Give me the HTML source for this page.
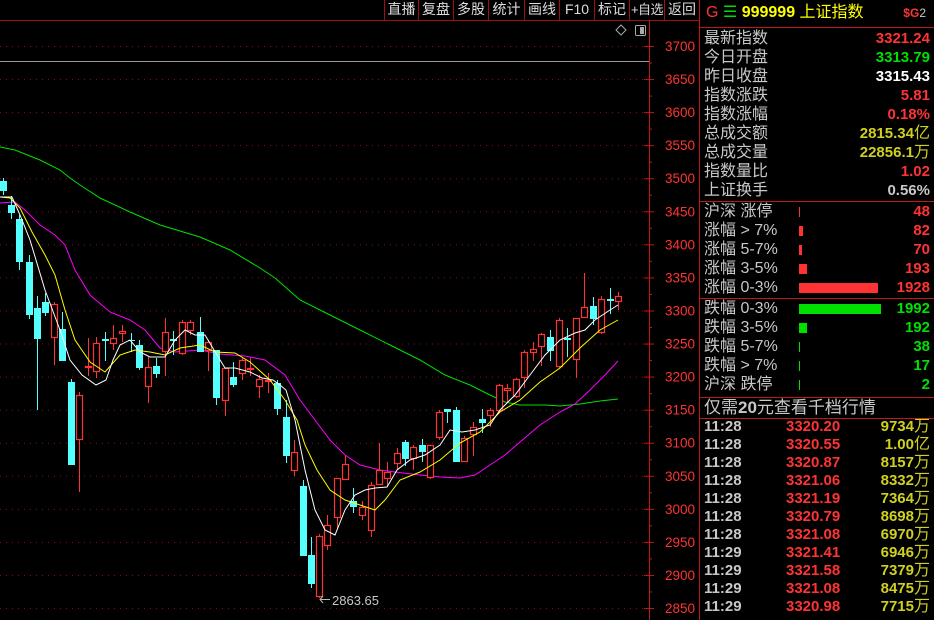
<!DOCTYPE html>
<html><head><meta charset="utf-8"><style>
*{margin:0;padding:0;box-sizing:border-box}
body{width:934px;height:620px;background:#000;overflow:hidden;position:relative;font-family:"Liberation Sans","Noto Sans CJK SC",sans-serif;color:#c8c8c8}
.tb{position:absolute;top:0;height:20px;border-left:1px solid #a01010;font-size:14px;color:#ddd;text-align:center;line-height:19px;white-space:nowrap;overflow:hidden}
#rp{position:absolute;left:699px;top:0;width:235px;height:620px;border-left:1px solid #c01818}
.r{position:absolute;left:4px;right:4px;height:19px;font-size:16px;line-height:19px}
.r .l{position:absolute;left:0;color:#c8c8c8}
.r .v{position:absolute;right:0;font-weight:bold;font-size:15px}
.hl{position:absolute;left:0;right:0;height:1px;background:#c01818}
.bar{position:absolute;left:95px;top:5px;height:10px}
.red{color:#ff3333}.grn{color:#00e000}.wht{color:#fff}.yel{color:#d0d020}.gry{color:#c8c8c8}
.t{position:absolute;left:4px;right:4px;height:18px;font-size:15px;line-height:18px;font-weight:bold}
.t>span{position:absolute}
</style></head><body>
<svg id="ch" width="699" height="620" style="position:absolute;left:0;top:0"></svg>
<div class="tb" style="left:384px;width:34px">直播</div>
<div class="tb" style="left:418px;width:35px">复盘</div>
<div class="tb" style="left:453px;width:35px">多股</div>
<div class="tb" style="left:488px;width:36px">统计</div>
<div class="tb" style="left:524px;width:35px">画线</div>
<div class="tb" style="left:559px;width:35px">F10</div>
<div class="tb" style="left:594px;width:35px">标记</div>
<div class="tb" style="left:629px;width:35px;font-size:13px;letter-spacing:-0.5px">+自选</div>
<div class="tb" style="left:664px;width:35px">返回</div>
<div id="rp">
<div style="position:absolute;left:6px;top:3px;font-size:16px;line-height:20px"><span class="red">G</span> <span class="grn">☰</span> <span style="color:#ffff00;font-weight:bold">999999</span> <span style="color:#ffff00">上证指数</span></div>
<div style="position:absolute;right:8px;top:6px;font-size:12px"><span class="red" style="font-weight:bold">$G</span>2</div>
<div class="hl" style="top:27px"></div>
<div class="r" style="top:29px"><span class="l">最新指数</span><span class="v red">3321.24</span></div>
<div class="r" style="top:48px"><span class="l">今日开盘</span><span class="v grn">3313.79</span></div>
<div class="r" style="top:67px"><span class="l">昨日收盘</span><span class="v wht">3315.43</span></div>
<div class="r" style="top:86px"><span class="l">指数涨跌</span><span class="v red">5.81</span></div>
<div class="r" style="top:105px"><span class="l">指数涨幅</span><span class="v red">0.18%</span></div>
<div class="r" style="top:124px"><span class="l">总成交额</span><span class="v yel">2815.34<span style="font-weight:normal;font-size:16px">亿</span></span></div>
<div class="r" style="top:143px"><span class="l">总成交量</span><span class="v yel">22856.1<span style="font-weight:normal;font-size:16px">万</span></span></div>
<div class="r" style="top:162px"><span class="l">指数量比</span><span class="v red">1.02</span></div>
<div class="r" style="top:181px"><span class="l">上证换手</span><span class="v gry">0.56%</span></div>
<div class="hl" style="top:201px"></div>
<div class="r" style="top:202px"><span class="l">沪深 涨停</span><div class="bar" style="width:1px;background:#ff3333"></div><span class="v red">48</span></div>
<div class="r" style="top:221px"><span class="l">涨幅 &gt; 7%</span><div class="bar" style="width:4px;background:#ff3333"></div><span class="v red">82</span></div>
<div class="r" style="top:240px"><span class="l">涨幅 5-7%</span><div class="bar" style="width:3px;background:#ff3333"></div><span class="v red">70</span></div>
<div class="r" style="top:259px"><span class="l">涨幅 3-5%</span><div class="bar" style="width:8px;background:#ff3333"></div><span class="v red">193</span></div>
<div class="r" style="top:278px"><span class="l">涨幅 0-3%</span><div class="bar" style="width:79px;background:#ff3333"></div><span class="v red">1928</span></div>
<div class="hl" style="top:298px"></div>
<div class="r" style="top:299px"><span class="l">跌幅 0-3%</span><div class="bar" style="width:82px;background:#00e000"></div><span class="v grn">1992</span></div>
<div class="r" style="top:318px"><span class="l">跌幅 3-5%</span><div class="bar" style="width:8px;background:#00e000"></div><span class="v grn">192</span></div>
<div class="r" style="top:337px"><span class="l">跌幅 5-7%</span><div class="bar" style="width:1px;background:#00e000"></div><span class="v grn">38</span></div>
<div class="r" style="top:356px"><span class="l">跌幅 &gt; 7%</span><div class="bar" style="width:1px;background:#00e000"></div><span class="v grn">17</span></div>
<div class="r" style="top:375px"><span class="l">沪深 跌停</span><div class="bar" style="width:1px;background:#00e000"></div><span class="v grn">2</span></div>
<div class="hl" style="top:397px"></div>
<div class="r" style="top:398px;font-size:17px"><span class="l">仅需<b>20</b>元查看千档行情</span></div>
<div class="hl" style="top:418px"></div>
<div id="ticks"></div>
</div>
<script>
var svg=document.getElementById('ch'),h='';
h+='<line x1="0" y1="20.5" x2="699" y2="20.5" stroke="#a01010"/>';
h+='<line x1="649.5" y1="20" x2="649.5" y2="620" stroke="#c01818"/>';
h+='<line x1="0" y1="61.5" x2="649" y2="61.5" stroke="#999"/>';
for(var i=0;i<18;i++){var y=46+i*33.06,p=3700-i*50;
h+='<line x1="0" y1="'+(y+.5)+'" x2="649" y2="'+(y+.5)+'" stroke="#8a1010" stroke-dasharray="1,5"/>';
h+='<line x1="644" y1="'+(y+.5)+'" x2="654" y2="'+(y+.5)+'" stroke="#c01818"/>';
h+='<line x1="649" y1="'+(y+17)+'" x2="652" y2="'+(y+17)+'" stroke="#c01818"/>';
h+='<text x="695" y="'+(y+5)+'" fill="#ff3333" font-size="13.5" text-anchor="end" font-family="Liberation Sans">'+p+'</text>';}
h+='<path d="M621 25 l5 5 l-5 5 l-5 -5z" fill="none" stroke="#aaa"/>';
h+='<rect x="635.5" y="25.5" width="10" height="10" fill="none" stroke="#aaa" rx="1"/><rect x="640" y="27" width="4" height="7" fill="#aaa"/>';
function pl(c,pts){h+='<polyline fill="none" stroke="'+c+'" stroke-width="1" points="'+pts+'"/>';}
pl('#00e000','0,147 15,150 40,160 60,170 70,178 80,185 100,198 130,212 160,225 200,237 230,250 260,268 275,278 300,300 330,315 360,330 390,345 420,360 445,375 470,385 490,395 505,402 520,405 545,405 560,406 580,404 600,401 618,399');
pl('#ff00ff','0,203 15,202 25,210 40,225 55,235 65,245 75,270 90,295 110,312 130,320 145,330 160,348 175,352 200,350 220,354 245,356 265,360 285,375 300,400 315,420 330,440 345,455 360,465 380,470 395,472 420,475 440,477 460,478 475,475 490,465 505,455 520,442 540,425 560,412 575,404 590,390 605,375 618,361');
var cs=[[3,0,181,191,178,195],[11,0,205,213,196,219],[19,0,219,262,215,270],[29,0,262,315,255,319],[37,0,308,339,296,410],[45,0,302,313,293,316],[54,1,304,338,302,365],[62,0,329,361,312,361],[71,0,382,465,379,465],[79,1,395,440,392,492],[88,1,366,368,338,376],[96,1,343,372,337,378],[105,0,339,341,332,361],[113,1,338,344,325,350],[122,1,331,334,325,342],[131,0,340,341,333,352],[139,0,345,368,340,370],[148,1,367,387,357,403],[156,0,366,374,358,378],[165,1,332,352,318,376],[173,0,339,341,331,355],[182,1,322,354,320,355],[190,1,322,331,320,335],[200,0,332,352,317,352],[208,1,342,351,340,371],[216,0,350,398,350,405],[225,1,368,401,368,416],[233,0,377,385,362,387],[242,1,360,374,358,380],[250,1,368,370,358,376],[259,1,379,387,375,398],[268,1,380,382,373,393],[277,0,383,409,380,415],[286,0,417,456,400,463],[294,1,452,471,440,476],[303,0,486,556,480,556],[311,0,555,584,537,588],[319,1,536,597,534,598],[327,1,525,546,515,550],[337,1,478,518,478,530],[345,1,464,480,455,480],[353,0,501,507,488,513],[362,1,507,516,501,520],[371,1,485,531,482,537],[379,1,470,485,443,485],[387,1,472,479,462,487],[397,1,453,464,448,470],[405,0,442,459,440,466],[413,1,447,459,445,470],[422,0,445,452,439,462],[430,1,445,478,445,479],[439,1,412,438,410,440],[447,0,409,412,409,423],[456,0,410,462,407,462],[464,1,438,462,436,462],[473,1,427,435,422,456],[482,0,419,423,409,433],[490,1,410,416,408,427],[499,1,385,411,384,413],[507,1,388,391,384,403],[516,1,379,397,378,398],[524,1,352,378,350,388],[533,1,349,353,342,361],[541,1,334,347,333,366],[550,0,337,351,330,361],[559,1,320,367,318,368],[567,0,338,340,328,357],[576,1,318,360,318,378],[584,1,307,318,273,318],[593,0,306,319,297,325],[601,1,299,333,296,334],[610,0,299,301,288,314],[618,1,296,302,292,310]];
cs.forEach(function(c){var x=c[0],col=c[1]?'#ff3333':'#54ffff';
h+='<line x1="'+(x+.5)+'" y1="'+c[4]+'" x2="'+(x+.5)+'" y2="'+c[5]+'" stroke="'+col+'"/>';
var hh=Math.max(c[3]-c[2],1);
if(c[1])h+='<rect x="'+(x-2.5)+'" y="'+(c[2]+.5)+'" width="6" height="'+(hh-1<1?1:hh-1)+'" fill="#000" stroke="'+col+'" stroke-width="1.2"/>';
else h+='<rect x="'+(x-3)+'" y="'+c[2]+'" width="7" height="'+hh+'" fill="'+col+'"/>';});
pl('#ffff00','0,197 10,198 20,208 32,232 45,255 55,275 65,310 75,340 90,362 105,372 120,355 135,350 150,352 165,355 180,348 200,345 215,352 235,353 250,362 270,380 285,400 297,420 305,445 317,470 330,490 345,500 360,505 375,510 385,500 400,480 420,472 440,460 460,443 480,432 500,412 520,400 540,382 560,368 580,348 600,330 618,320');
pl('#ffffff','0,197 12,197 20,215 30,240 45,290 60,330 70,360 82,375 96,385 106,380 113,360 120,345 130,340 140,352 150,357 165,357 175,340 185,330 195,335 205,335 217,355 225,368 235,368 250,372 262,378 273,380 280,385 286,390 295,420 305,470 315,510 325,530 335,535 345,510 355,495 365,490 375,488 387,487 397,470 410,460 425,455 440,445 450,430 462,432 475,430 490,425 500,410 515,395 530,375 545,355 560,340 575,333 585,330 595,320 610,310 618,305');
h+='<line x1="320" y1="599.5" x2="330" y2="599.5" stroke="#bbb"/><path d="M323 596 l-3 3.5 l3 3.5" fill="none" stroke="#bbb"/>';
h+='<text x="332" y="605" fill="#c8c8c8" font-size="13" font-family="Liberation Sans">2863.65</text>';
svg.innerHTML=h;
var tk=[['11:28','3320.20','9734','万'],['11:28','3320.55','1.00','亿'],['11:28','3320.87','8157','万'],['11:28','3321.06','8332','万'],['11:28','3321.19','7364','万'],['11:28','3320.79','8698','万'],['11:28','3321.08','6970','万'],['11:29','3321.41','6946','万'],['11:29','3321.58','7379','万'],['11:29','3321.08','8475','万'],['11:29','3320.98','7715','万']],th='';
tk.forEach(function(t,i){th+='<div class="t" style="top:'+(418+i*18)+'px"><span style="left:0;color:#c8c8c8">'+t[0]+'</span><span style="left:82px;color:#ff3333">'+t[1]+'</span><span style="right:0;color:#d0d020">'+t[2]+'<span style="font-weight:normal;font-size:16px">'+t[3]+'</span></span></div>';});
document.getElementById('ticks').innerHTML=th;
</script>
</body></html>
